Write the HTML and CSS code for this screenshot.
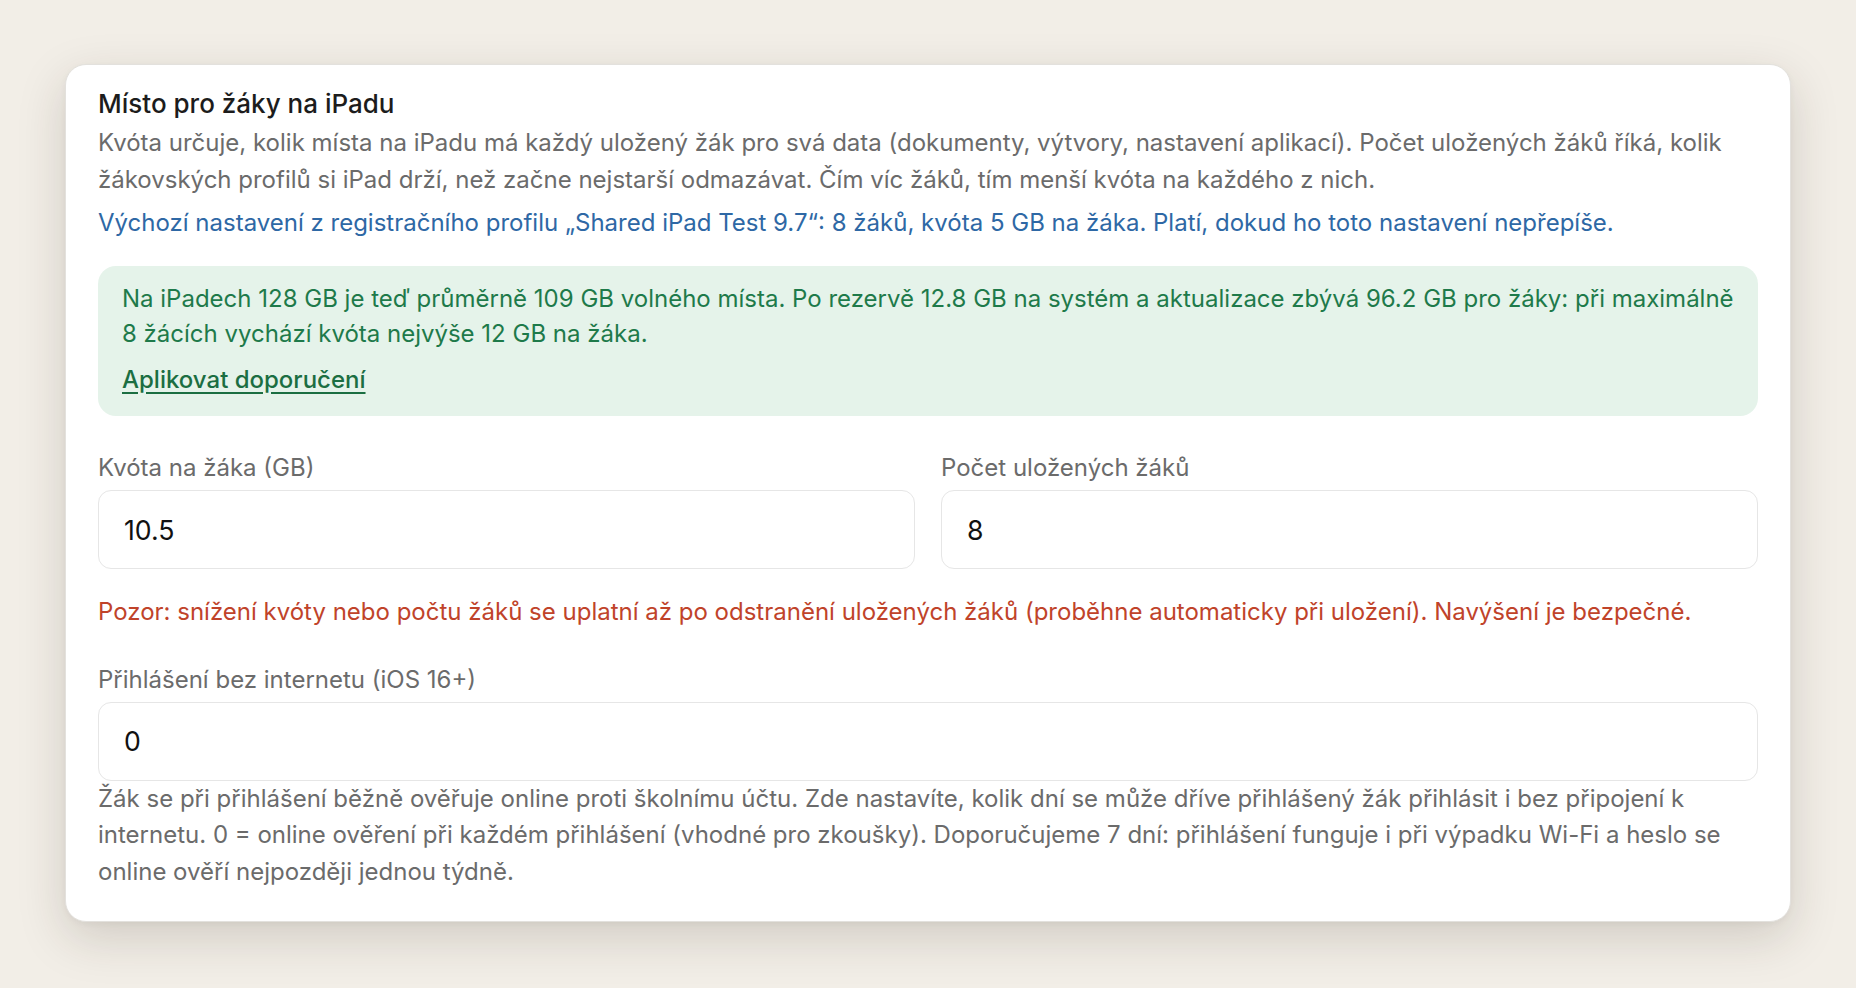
FILE: index.html
```html
<!DOCTYPE html>
<html lang="cs">
<head>
    <meta charset="UTF-8">
    <meta name="viewport" content="width=device-width, initial-scale=1.0">
    <title>Místo pro žáky na iPadu</title>
    <link rel="stylesheet" href="styles.css">
</head>
<body>

    <div class="card">
        <h3 class="card-title">Místo pro žáky na iPadu</h3>
        <p class="desc">Kvóta určuje, kolik místa na iPadu má každý uložený žák pro svá data (dokumenty, výtvory, nastavení aplikací). Počet uložených žáků říká, kolik žákovských profilů si iPad drží, než začne nejstarší odmazávat. Čím víc žáků, tím menší kvóta na každého z nich.</p>
        <p class="profile-note">Výchozí nastavení z registračního profilu „Shared iPad Test 9.7“: 8 žáků, kvóta 5 GB na žáka. Platí, dokud ho toto nastavení nepřepíše.</p>

        <div class="tip">
            <p>Na iPadech 128 GB je teď průměrně 109 GB volného místa. Po rezervě 12.8 GB na systém a aktualizace zbývá 96.2 GB pro žáky: při maximálně 8 žácích vychází kvóta nejvýše 12 GB na žáka.</p>
            <a href="#" class="tip-link">Aplikovat doporučení</a>
        </div>

        <div class="field-row">
            <div class="field">
                <label for="quota">Kvóta na žáka (GB)</label>
                <input id="quota" type="text" value="10.5">
            </div>
            <div class="field">
                <label for="users">Počet uložených žáků</label>
                <input id="users" type="text" value="8">
            </div>
        </div>
        <p class="warning">Pozor: snížení kvóty nebo počtu žáků se uplatní až po odstranění uložených žáků (proběhne automaticky při uložení). Navýšení je bezpečné.</p>

        <div class="field offline">
            <label for="offline">Přihlášení bez internetu (iOS 16+)</label>
            <input id="offline" type="text" value="0">
        </div>
        <p class="help">Žák se při přihlášení běžně ověřuje online proti školnímu účtu. Zde nastavíte, kolik dní se může dříve přihlášený žák přihlásit i bez připojení k internetu. 0 = online ověření při každém přihlášení (vhodné pro zkoušky). Doporučujeme 7 dní: přihlášení funguje i při výpadku Wi-Fi a heslo se online ověří nejpozději jednou týdně.</p>
    </div>

</body>
</html>
```

FILE: styles.css
```css
body {
    margin: 0;
    padding: 64px 65px;
    background-color: #f2eee7;
    font-family: Inter, "Noto Sans", sans-serif;
    font-size: 24px;
    line-height: 36.5px;
    color: #6b6b6b;
}
.card {
    background: white;
    border: 1px solid #e3e1dd;
    border-radius: 21px;
    padding: 23px 32px 31px;
    box-shadow: 0 16px 48px rgba(45, 38, 25, 0.17), 0 2px 6px rgba(0, 0, 0, 0.04);
}
.card-title {
    margin: 0;
    font-size: 26px;
    line-height: 32px;
    font-weight: 500;
    color: #1c1c1c;
}
.desc {
    margin: 5px 0 0;
}
.profile-note {
    margin: 7px 0 0;
    color: #2e68a5;
}
.tip {
    margin-top: 24px;
    background-color: #e5f3ea;
    border-radius: 18px;
    padding: 15px 24px 18px;
    color: #1e7a4a;
}
.tip p {
    margin: 0;
    line-height: 35.5px;
}
.tip-link {
    display: inline-block;
    margin-top: 10px;
    color: #1b6e42;
    font-weight: 500;
    text-decoration: underline;
    text-underline-offset: 4px;
}
.field-row {
    display: grid;
    grid-template-columns: 1fr 1fr;
    gap: 26px;
    margin-top: 37px;
}
.field label {
    display: block;
    line-height: 30px;
    margin-bottom: 7px;
}
.field input {
    box-sizing: border-box;
    width: 100%;
    height: 79px;
    padding: 0 25px;
    border: 1.5px solid #e6e6e6;
    border-radius: 13px;
    font-family: Inter, "Noto Sans", sans-serif;
    font-size: 26.67px;
    color: #111;
    background: #fff;
    outline: none;
}
.warning {
    margin: 25px 0 0;
    color: #c0432a;
}
.offline {
    margin-top: 34px;
}
.help {
    margin: 0;
}
```
